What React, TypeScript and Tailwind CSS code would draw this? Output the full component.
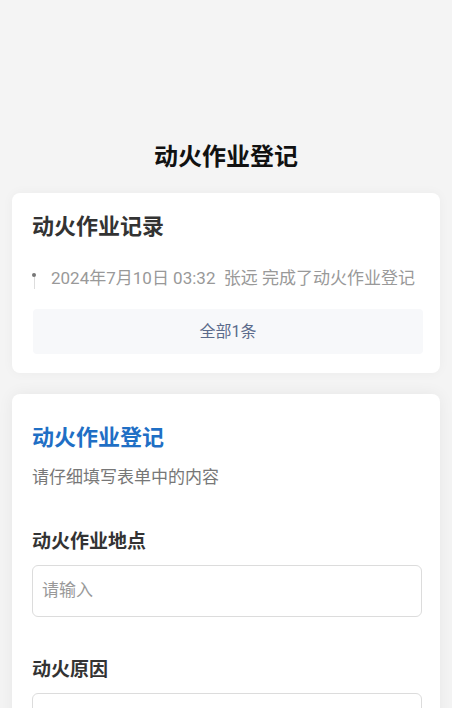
import React from 'react';

const font = { fontFamily: 'Roboto, "Noto Sans CJK SC", "Noto Sans", sans-serif' };

function Field({ label }: { label: string }) {
  return (
    <div className="mt-[40px] first:mt-0">
      <div className="text-[19px] font-bold leading-[26px] text-[#333]">{label}</div>
      <div className="mt-[10px] flex h-[52px] items-center rounded-[6px] border border-[#dcdcdc] px-[9px]">
        <span className="text-[17px] text-[#999]">请输入</span>
      </div>
    </div>
  );
}

export default function App() {
  return (
    <div className="min-h-[708px] bg-[#f4f4f4] px-[12px] pt-[140px] pb-[40px]" style={font}>
      <h1 className="text-center text-[24px] font-bold leading-[34px] text-[#111]">动火作业登记</h1>

      <div className="mt-[19px] rounded-[8px] bg-white pl-[20px] pr-[17px] pt-[18px] pb-[19px] shadow-[0_0_12px_rgba(0,0,0,0.04)]">
        <div className="text-[22px] font-bold leading-[32px] text-[#333]">动火作业记录</div>
        <div className="mt-[22px] flex items-start">
          <div className="flex w-[19px] flex-col items-start pt-[8px]">
            <span className="h-[4px] w-[4px] rounded-full bg-[#777]" />
            <span className="ml-[1.5px] h-[12px] w-px bg-[#ddd]" />
          </div>
          <span className="text-[17px] leading-[26px] text-[#999]">2024年7月10日 03:32&nbsp;&nbsp;张远 完成了动火作业登记</span>
        </div>
        <div className="mt-[18px] ml-[1px] flex h-[45px] items-center justify-center rounded-[4px] bg-[#f7f8fa] text-[16px] text-[#5b6b8c]">
          全部1条
        </div>
      </div>

      <div className="mt-[21px] rounded-[8px] bg-white pl-[20px] pr-[18px] pt-[28px] pb-[30px] shadow-[0_0_16px_rgba(0,0,0,0.06)]">
        <div className="text-[22px] font-bold leading-[32px] text-[#1f6fc5]">动火作业登记</div>
        <div className="mt-[11px] text-[17px] leading-[24px] text-[#777]">请仔细填写表单中的内容</div>
        <div className="mt-[40px]">
          <Field label="动火作业地点" />
          <Field label="动火原因" />
        </div>
      </div>
    </div>
  );
}
